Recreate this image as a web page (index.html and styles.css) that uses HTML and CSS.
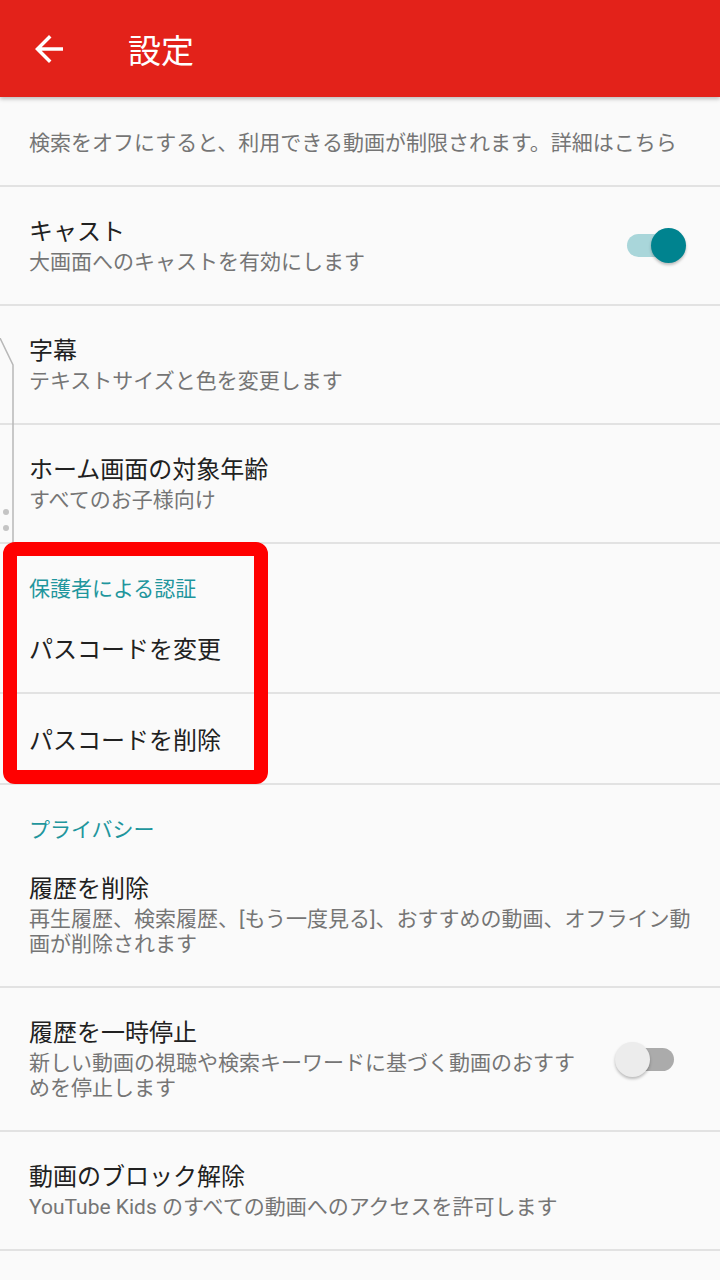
FILE: index.html
```html
<!DOCTYPE html>
<html lang="ja">

<head>
    <meta charset="utf-8">
    <link rel="stylesheet" href="styles.css">
</head>

<body>
    <header class="appbar">
        <svg class="back" viewBox="0 0 24 24" width="42" height="42">
            <path fill="#fff" d="M20 11H7.83l5.59-5.59L12 4l-8 8 8 8 1.41-1.41L7.83 13H20v-2z"/>
        </svg>
        <h1 class="appbar-title">設定</h1>
    </header>

    <main class="settings">
        <div class="note">検索をオフにすると、利用できる動画が制限されます。詳細はこちら</div>

        <div class="item">
            <div class="item-text">
                <div class="item-title">キャスト</div>
                <div class="item-sub">大画面へのキャストを有効にします</div>
            </div>
            <div class="switch on"><span class="track"></span><span class="thumb"></span></div>
        </div>

        <div class="item">
            <div class="item-text">
                <div class="item-title">字幕</div>
                <div class="item-sub">テキストサイズと色を変更します</div>
            </div>
        </div>

        <div class="item">
            <div class="item-text">
                <div class="item-title">ホーム画面の対象年齢</div>
                <div class="item-sub">すべてのお子様向け</div>
            </div>
        </div>

        <div class="section-head">保護者による認証</div>
        <div class="item plain">
            <div class="item-title">パスコードを変更</div>
        </div>
        <div class="item plain">
            <div class="item-title">パスコードを削除</div>
        </div>

        <div class="section-head">プライバシー</div>
        <div class="item">
            <div class="item-text">
                <div class="item-title">履歴を削除</div>
                <div class="item-sub">再生履歴、検索履歴、[もう一度見る]、おすすめの動画、オフライン動画が削除されます</div>
            </div>
        </div>

        <div class="item">
            <div class="item-text narrow">
                <div class="item-title">履歴を一時停止</div>
                <div class="item-sub">新しい動画の視聴や検索キーワードに基づく動画のおすすめを停止します</div>
            </div>
            <div class="switch off"><span class="track"></span><span class="thumb"></span></div>
        </div>

        <div class="item">
            <div class="item-text">
                <div class="item-title">動画のブロック解除</div>
                <div class="item-sub">YouTube Kids のすべての動画へのアクセスを許可します</div>
            </div>
        </div>
    </main>

    <!-- overlays: edge ghost and the red annotation frame -->
    <svg class="ghost" width="20" height="220" viewBox="0 0 20 220">
        <polyline points="0,0 13,27 13,207" fill="none" stroke="#b8b8b8" stroke-width="1.5"/>
        <circle cx="6" cy="174" r="3" fill="#c4c4c4"/>
        <circle cx="6" cy="190" r="3" fill="#c4c4c4"/>
    </svg>
    <div class="mark"></div>
</body>
</html>
```

FILE: styles.css
```css
body {
    margin: 0;
    background: #fafafa;
    font-family: Roboto, "Noto Sans CJK JP", sans-serif;
    color: #212121;
    position: relative;
    min-height: 1280px;
}

.appbar {
    height: 97px;
    background: #e3221a;
    display: flex;
    align-items: center;
    padding-left: 28px;
    box-shadow: 0 2px 4px rgba(0, 0, 0, 0.25);
    position: relative;
    z-index: 2;
}

.back {
    display: block;
}

.appbar-title {
    margin: 0 0 0 58px;
    font-family: "Noto Sans CJK JP", sans-serif;
    font-weight: 400;
    font-size: 33px;
    color: #fff;
    line-height: 40px;
}

.note {
    padding: 32px 29px 28px;
    font-size: 21px;
    line-height: 28px;
    color: #757575;
    border-bottom: 2px solid #e2e2e2;
}

.item {
    display: flex;
    align-items: center;
    padding: 29px;
    border-bottom: 2px solid #e2e2e2;
}

.item.plain {
    padding-top: 31px;
    padding-bottom: 26px;
}

.item-text {
    flex: 1;
}

.item-text.narrow {
    flex: 0 0 556px;
}

.item-title {
    font-size: 24px;
    line-height: 32px;
    color: #212121;
}

.item-sub {
    margin-top: 2px;
    font-size: 21px;
    line-height: 25px;
    color: #757575;
}

.section-head {
    padding: 31px 29px 0;
    font-size: 21px;
    line-height: 28px;
    color: #1f969d;
}

.switch {
    position: relative;
    width: 65px;
    height: 35px;
    margin-left: auto;
}

.track {
    position: absolute;
    left: 6px;
    right: 6px;
    top: 6px;
    height: 23px;
    border-radius: 12px;
}

.thumb {
    position: absolute;
    top: 0;
    width: 35px;
    height: 35px;
    border-radius: 50%;
    box-shadow: 0 2px 3px rgba(0, 0, 0, 0.25);
}

.switch.on {
    margin-right: 5px;
}

.switch.on .track {
    background: #a9d6da;
}

.switch.on .thumb {
    right: 0;
    background: #00838f;
}

.switch.off {
    margin-right: 11px;
}

.switch.off .track {
    background: #ababab;
}

.switch.off .thumb {
    left: 0;
    background: #ececec;
}

.ghost {
    position: absolute;
    left: 0;
    top: 338px;
}

.mark {
    position: absolute;
    left: 3px;
    top: 542px;
    width: 265px;
    height: 242px;
    box-sizing: border-box;
    border: 14px solid #ff0000;
    border-radius: 12px;
}
```
